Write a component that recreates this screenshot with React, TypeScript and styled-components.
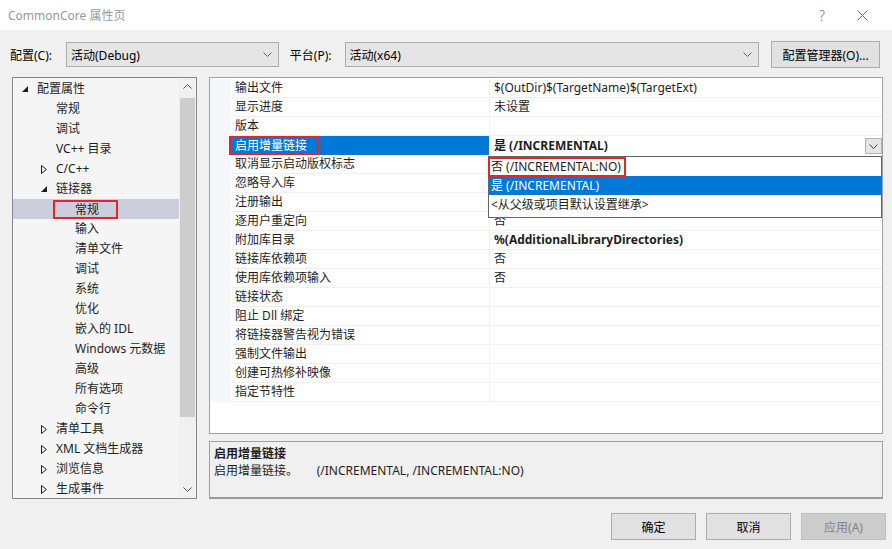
import React from 'react';
import styled, { createGlobalStyle } from 'styled-components';

const FONT = '"Noto Sans", "Noto Sans CJK SC", sans-serif';

const GlobalStyle = createGlobalStyle`
  html, body {
    margin: 0;
    padding: 0;
    background: #f0f0f0;
  }
  body {
    font-family: ${FONT};
    font-size: 12px;
    color: #000;
  }
  * {
    box-sizing: border-box;
  }
`;

type TreeNode = {
  label: string;
  level: number;
  arrow?: 'open' | 'closed';
  selected?: boolean;
};

const treeNodes: TreeNode[] = [
  { label: '配置属性', level: 0, arrow: 'open' },
  { label: '常规', level: 1 },
  { label: '调试', level: 1 },
  { label: 'VC++ 目录', level: 1 },
  { label: 'C/C++', level: 1, arrow: 'closed' },
  { label: '链接器', level: 1, arrow: 'open' },
  { label: '常规', level: 2, selected: true },
  { label: '输入', level: 2 },
  { label: '清单文件', level: 2 },
  { label: '调试', level: 2 },
  { label: '系统', level: 2 },
  { label: '优化', level: 2 },
  { label: '嵌入的 IDL', level: 2 },
  { label: 'Windows 元数据', level: 2 },
  { label: '高级', level: 2 },
  { label: '所有选项', level: 2 },
  { label: '命令行', level: 2 },
  { label: '清单工具', level: 1, arrow: 'closed' },
  { label: 'XML 文档生成器', level: 1, arrow: 'closed' },
  { label: '浏览信息', level: 1, arrow: 'closed' },
  { label: '生成事件', level: 1, arrow: 'closed' },
];

type Prop = {
  name: string;
  value: string;
  bold?: boolean;
  selected?: boolean;
};

// values of the rows under the open list are hidden by it
const props: Prop[] = [
  { name: '输出文件', value: '$(OutDir)$(TargetName)$(TargetExt)' },
  { name: '显示进度', value: '未设置' },
  { name: '版本', value: '' },
  { name: '启用增量链接', value: '是 (/INCREMENTAL)', bold: true, selected: true },
  { name: '取消显示启动版权标志', value: '' },
  { name: '忽略导入库', value: '' },
  { name: '注册输出', value: '' },
  { name: '逐用户重定向', value: '否' },
  { name: '附加库目录', value: '%(AdditionalLibraryDirectories)', bold: true },
  { name: '链接库依赖项', value: '否' },
  { name: '使用库依赖项输入', value: '否' },
  { name: '链接状态', value: '' },
  { name: '阻止 Dll 绑定', value: '' },
  { name: '将链接器警告视为错误', value: '' },
  { name: '强制文件输出', value: '' },
  { name: '创建可热修补映像', value: '' },
  { name: '指定节特性', value: '' },
];

const Window = styled.div`
  width: 892px;
  height: 549px;
  background: #f0f0f0;
  display: flex;
  flex-direction: column;
  overflow: hidden;
`;

const TitleBar = styled.div`
  height: 30px;
  background: #fff;
  display: flex;
  align-items: center;
  padding-left: 8px;
  color: #999;
  font-size: 12px;
`;

const TitleButtons = styled.div`
  margin-left: auto;
  display: flex;
  padding-right: 10px;
`;

const TitleButton = styled.div`
  width: 40px;
  height: 30px;
  display: flex;
  align-items: center;
  justify-content: center;
  color: #777;
  font-size: 14px;
  font-weight: 300;
`;

const ConfigRow = styled.div`
  display: flex;
  align-items: center;
  padding: 11px 12px 0 10px;
  height: 38px;
`;

const Label = styled.span<{ $gap: number }>`
  margin-right: ${p => p.$gap}px;
  white-space: nowrap;
`;

const Combo = styled.div<{ $width: number; $after: number }>`
  width: ${p => p.$width}px;
  height: 25px;
  margin-right: ${p => p.$after}px;
  background: #e5e5e5;
  border: 1px solid #acacac;
  display: flex;
  align-items: center;
  padding: 0 6px 0 4px;
`;

const ComboText = styled.span`
  flex: 1;
`;

const Button = styled.div<{ $disabled?: boolean; $width: number }>`
  width: ${p => p.$width}px;
  height: 27px;
  display: flex;
  align-items: center;
  justify-content: center;
  background: ${p => (p.$disabled ? '#cccccc' : '#e1e1e1')};
  border: 1px solid ${p => (p.$disabled ? '#bfbfbf' : '#adadad')};
  color: ${p => (p.$disabled ? '#838383' : '#000')};
  white-space: nowrap;
`;

const Main = styled.div`
  display: flex;
  margin-top: 9px;
  padding-left: 12px;
  height: 422px;
`;

const Tree = styled.div`
  width: 185px;
  height: 100%;
  border: 1px solid #828790;
  background: #f5f5f5;
  display: flex;
`;

const TreeList = styled.div`
  flex: 1;
  padding-top: 1px;
  overflow: hidden;
`;

const TreeRow = styled.div<{ $level: number; $selected?: boolean }>`
  height: 20px;
  display: flex;
  align-items: center;
  padding-left: ${p => 5 + p.$level * 19}px;
  background: ${p => (p.$selected ? '#cccedb' : 'transparent')};
  color: #1e1e1e;
  white-space: nowrap;
  line-height: 20px;
`;

const ArrowBox = styled.span`
  width: 19px;
  height: 20px;
  display: flex;
  align-items: center;
  padding-left: 4px;
`;

const TreeLabel = styled.span<{ $boxed?: boolean }>`
  ${p =>
    p.$boxed &&
    `
    border: 2px solid #e3262d;
    margin-left: -22px;
    padding: 0 17px 0 20px;
    height: 19px;
    line-height: 15px;
    margin-top: 1px;
  `}
`;

const Scrollbar = styled.div`
  width: 17px;
  background: #f0f0f0;
  display: flex;
  flex-direction: column;
`;

const ScrollArrow = styled.div`
  height: 17px;
  display: flex;
  align-items: center;
  justify-content: center;
`;

const ScrollTrack = styled.div`
  flex: 1;
  padding: 3px 0 0 1px;
`;

const ScrollThumb = styled.div`
  width: 15px;
  height: 319px;
  background: #cdcdcd;
`;

const RightColumn = styled.div`
  margin-left: 12px;
  width: 674px;
  display: flex;
  flex-direction: column;
`;

const Grid = styled.div`
  position: relative;
  height: 357px;
  border: 1px solid #a0a0a0;
  background: #fff;
  padding-top: 1px;
`;

const GridRow = styled.div`
  display: grid;
  grid-template-columns: 21px 259px 1fr;
  height: 19px;
`;

const Gutter = styled.div`
  background: #f5f7fb;
`;

const NameCell = styled.div<{ $selected?: boolean }>`
  border-bottom: 1px solid #f0f0f0;
  border-right: 1px solid #f0f0f0;
  background: ${p => (p.$selected ? '#0078d7' : '#fff')};
  color: ${p => (p.$selected ? '#fff' : '#1e1e1e')};
  padding-left: 4px;
  line-height: 18px;
  white-space: nowrap;
  display: flex;
  align-items: center;
`;

const NameBox = styled.span<{ $boxed?: boolean }>`
  ${p =>
    p.$boxed &&
    `
    border: 2px solid #e3262d;
    margin-left: -6px;
    padding: 0 10px 0 4px;
    height: 20px;
    line-height: 16px;
  `}
`;

const ValueCell = styled.div<{ $bold?: boolean }>`
  border-bottom: 1px solid #f0f0f0;
  padding-left: 4px;
  line-height: 18px;
  font-weight: ${p => (p.$bold ? 700 : 400)};
  color: #1e1e1e;
  white-space: nowrap;
  display: flex;
  align-items: center;
`;

const ValueText = styled.span`
  flex: 1;
`;

const DropButton = styled.div`
  width: 17px;
  height: 16px;
  background: #e5e5e5;
  border: 1px solid #b4b4b4;
  display: flex;
  align-items: center;
  justify-content: center;
`;

const Popup = styled.div`
  position: absolute;
  left: 278px;
  top: 78px;
  width: 394px;
  height: 62px;
  background: #fff;
  border: 1px solid #646464;
`;

const PopupItem = styled.div<{ $active?: boolean }>`
  height: 19px;
  line-height: 19px;
  padding-left: 2px;
  background: ${p => (p.$active ? '#0078d7' : '#fff')};
  color: ${p => (p.$active ? '#fff' : '#1e1e1e')};
  white-space: nowrap;
`;

const PopupBoxed = styled.span`
  display: inline-block;
  margin-left: -3px;
  margin-top: -1px;
  height: 20px;
  line-height: 16px;
  padding: 0 3px 0 1px;
  border: 2px solid #e3262d;
`;

const Description = styled.div`
  margin-top: 7px;
  height: 58px;
  border: 1px solid #a0a0a0;
  border-bottom: 2px solid #9a9a9a;
  background: #f0f0f0;
  padding: 3px 4px;
  line-height: 17px;
  color: #1e1e1e;
`;

const DescTitle = styled.div`
  font-weight: 700;
`;

const Footer = styled.div`
  display: flex;
  justify-content: flex-end;
  gap: 10px;
  padding: 14px 6px 0 0;
`;

const Chevron = ({ up = false, color = '#606060' }: { up?: boolean; color?: string }) => (
  <svg width="9" height="5" viewBox="0 0 9 5">
    <polyline
      points={up ? '0.5,4.5 4.5,0.5 8.5,4.5' : '0.5,0.5 4.5,4.5 8.5,0.5'}
      fill="none"
      stroke={color}
      strokeWidth="1"
    />
  </svg>
);

const TreeArrow = ({ kind }: { kind: 'open' | 'closed' }) =>
  kind === 'open' ? (
    <svg width="6" height="6" viewBox="0 0 6 6">
      <polygon points="6,0 6,6 0,6" fill="#1e1e1e" />
    </svg>
  ) : (
    <svg width="6" height="9" viewBox="0 0 6 9">
      <polygon points="0.5,0.5 5.5,4.5 0.5,8.5" fill="none" stroke="#1e1e1e" strokeWidth="1" />
    </svg>
  );

const CloseIcon = () => (
  <svg width="11" height="11" viewBox="0 0 11 11">
    <path d="M0.5 0.5 L10.5 10.5 M10.5 0.5 L0.5 10.5" stroke="#666" strokeWidth="1" />
  </svg>
);

const App: React.FC = () => {
  return (
    <Window>
      <GlobalStyle />
      <TitleBar>
        CommonCore 属性页
        <TitleButtons>
          <TitleButton>?</TitleButton>
          <TitleButton>
            <CloseIcon />
          </TitleButton>
        </TitleButtons>
      </TitleBar>

      <ConfigRow>
        <Label $gap={14}>配置(C):</Label>
        <Combo $width={213} $after={11}>
          <ComboText>活动(Debug)</ComboText>
          <Chevron />
        </Combo>
        <Label $gap={13}>平台(P):</Label>
        <Combo $width={415} $after={12}>
          <ComboText>活动(x64)</ComboText>
          <Chevron />
        </Combo>
        <Button $width={109}>配置管理器(O)...</Button>
      </ConfigRow>

      <Main>
        <Tree>
          <TreeList>
            {treeNodes.map((node, i) => (
              <TreeRow key={i} $level={node.level} $selected={node.selected}>
                <ArrowBox>{node.arrow && <TreeArrow kind={node.arrow} />}</ArrowBox>
                <TreeLabel $boxed={node.selected}>{node.label}</TreeLabel>
              </TreeRow>
            ))}
          </TreeList>
          <Scrollbar>
            <ScrollArrow>
              <Chevron up color="#505050" />
            </ScrollArrow>
            <ScrollTrack>
              <ScrollThumb />
            </ScrollTrack>
            <ScrollArrow>
              <Chevron color="#505050" />
            </ScrollArrow>
          </Scrollbar>
        </Tree>

        <RightColumn>
          <Grid>
            {props.map((p, i) => (
              <GridRow key={i}>
                <Gutter />
                <NameCell $selected={p.selected}>
                  <NameBox $boxed={p.selected}>{p.name}</NameBox>
                </NameCell>
                <ValueCell $bold={p.bold}>
                  <ValueText>{p.value}</ValueText>
                  {p.selected && (
                    <DropButton>
                      <Chevron color="#404040" />
                    </DropButton>
                  )}
                </ValueCell>
              </GridRow>
            ))}
            <Popup>
              <PopupItem>
                <PopupBoxed>否 (/INCREMENTAL:NO)</PopupBoxed>
              </PopupItem>
              <PopupItem $active>是 (/INCREMENTAL)</PopupItem>
              <PopupItem>&lt;从父级或项目默认设置继承&gt;</PopupItem>
            </Popup>
          </Grid>
          <Description>
            <DescTitle>启用增量链接</DescTitle>
            <div>启用增量链接。&nbsp;&nbsp;&nbsp;&nbsp;&nbsp;&nbsp;(/INCREMENTAL, /INCREMENTAL:NO)</div>
          </Description>
        </RightColumn>
      </Main>

      <Footer>
        <Button $width={85}>确定</Button>
        <Button $width={85}>取消</Button>
        <Button $width={85} $disabled>
          应用(A)
        </Button>
      </Footer>
    </Window>
  );
};

export default App;
